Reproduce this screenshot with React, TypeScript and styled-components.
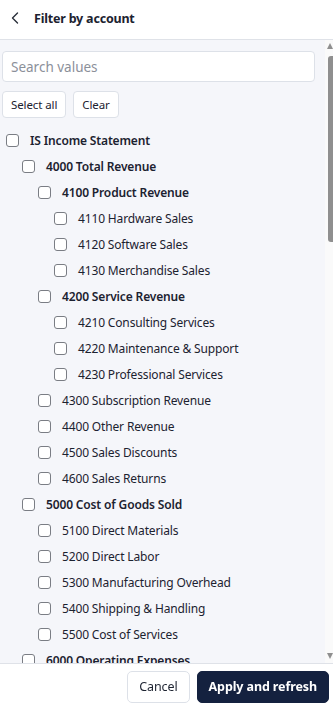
import React, { useEffect, useRef, useState } from "react";
import styled, { createGlobalStyle } from "styled-components";

const GlobalStyle = createGlobalStyle`
  html, body { margin: 0; padding: 0; height: 100%; }
  body { font-family: "Noto Sans", "Open Sans", sans-serif; color: #1c2230; background: #fff; }
  #root { height: 100%; }
`;

const Panel = styled.div`
  height: 100vh;
  display: flex;
  flex-direction: column;
  background: #fff;
`;

const Header = styled.div`
  height: 40px;
  box-sizing: border-box;
  flex: none;
  display: flex;
  align-items: center;
  gap: 12px;
  padding: 0 0 3px 8px;
  border-bottom: 1px solid #dfe2e8;
`;

const BackButton = styled.button`
  border: 0;
  background: none;
  padding: 0;
  width: 14px;
  height: 16px;
  display: flex;
  align-items: center;
  justify-content: center;
  color: #2a2f3a;
`;

const Title = styled.h1`
  margin: 0;
  font-size: 12.5px;
  font-weight: 700;
  letter-spacing: -0.2px;
`;

const Body = styled.div`
  flex: 1;
  min-height: 0;
  display: flex;
`;

const Scroll = styled.div`
  flex: 1;
  overflow-y: auto;
  background: #f5f6fa;
  padding: 11px 10px 0 2px;
  scrollbar-width: none;
  &::-webkit-scrollbar { display: none; }
`;

const Track = styled.div`
  flex: none;
  width: 8px;
  background: #fafafa;
  display: flex;
  flex-direction: column;
  align-items: flex-end;
`;

const Arrow = styled.div<{ $down?: boolean }>`
  flex: none;
  width: 0;
  height: 0;
  margin: ${(p) => (p.$down ? "auto 0 4px 0" : "3px 0 0 0")};
  border-left: 3.5px solid transparent;
  border-right: 3.5px solid transparent;
  ${(p) => (p.$down ? "border-top: 6px solid #8f8f8f;" : "border-bottom: 6px solid #8f8f8f;")}
`;

const Thumb = styled.div`
  flex: none;
  width: 5px;
  background: #8f8f8f;
  border-radius: 3px 0 0 3px;
`;

const SearchInput = styled.input`
  display: block;
  box-sizing: border-box;
  width: 100%;
  height: 31px;
  padding: 0 8px;
  border: 1px solid #dde1e8;
  border-radius: 4px;
  background: #fff;
  font-family: inherit;
  font-size: 13.5px;
  color: #1c2230;
  outline: none;
  &::placeholder { color: #8b909a; }
`;

const Actions = styled.div`
  display: flex;
  gap: 7px;
  margin-top: 9px;
  margin-bottom: 9px;
`;

const SmallButton = styled.button`
  height: 27px;
  padding: 0 8px;
  background: #fff;
  border: 1px solid #dde1e8;
  border-radius: 4px;
  font-family: inherit;
  font-size: 11.5px;
  letter-spacing: -0.1px;
  color: #1c2230;
`;

const Tree = styled.ul`
  list-style: none;
  margin: 0;
  padding: 0 0 8px 0;
`;

const Row = styled.li<{ $level: number; $bold?: boolean }>`
  height: 26px;
  display: flex;
  align-items: center;
  gap: 11px;
  padding-left: ${(p) => 4 + p.$level * 16}px;
  font-size: 12px;
  letter-spacing: -0.15px;
  font-weight: ${(p) => (p.$bold ? 600 : 400)};
  white-space: nowrap;
`;

const Box = styled.input.attrs({ type: "checkbox" })`
  appearance: none;
  margin: 0;
  width: 13px;
  height: 13px;
  flex: none;
  border: 1px solid #7a7d84;
  border-radius: 3px;
  background: #fff;
`;

const Footer = styled.div`
  flex: none;
  height: 46px;
  box-sizing: border-box;
  border-top: 1px solid #dfe2e8;
  display: flex;
  align-items: center;
  justify-content: flex-end;
  gap: 7px;
  padding: 0 4px 0 0;
`;

const FooterButton = styled.button<{ $primary?: boolean }>`
  height: 32px;
  padding: 0 11px;
  border-radius: 5px;
  font-family: inherit;
  font-size: 12.5px;
  letter-spacing: -0.1px;
  font-weight: ${(p) => (p.$primary ? 700 : 400)};
  color: ${(p) => (p.$primary ? "#fff" : "#1c2230")};
  background: ${(p) => (p.$primary ? "#14213f" : "#fff")};
  border: 1px solid ${(p) => (p.$primary ? "#14213f" : "#dde1e8")};
`;

type Item = [number, string, boolean?];

const items: Item[] = [
  [0, "IS Income Statement", true],
  [1, "4000 Total Revenue", true],
  [2, "4100 Product Revenue", true],
  [3, "4110 Hardware Sales"],
  [3, "4120 Software Sales"],
  [3, "4130 Merchandise Sales"],
  [2, "4200 Service Revenue", true],
  [3, "4210 Consulting Services"],
  [3, "4220 Maintenance & Support"],
  [3, "4230 Professional Services"],
  [2, "4300 Subscription Revenue"],
  [2, "4400 Other Revenue"],
  [2, "4500 Sales Discounts"],
  [2, "4600 Sales Returns"],
  [1, "5000 Cost of Goods Sold", true],
  [2, "5100 Direct Materials"],
  [2, "5200 Direct Labor"],
  [2, "5300 Manufacturing Overhead"],
  [2, "5400 Shipping & Handling"],
  [2, "5500 Cost of Services"],
  [1, "6000 Operating Expenses", true],
  [2, "6100 Personnel Expenses", true],
  [3, "6110 Salaries & Wages"],
  [3, "6120 Payroll Taxes"],
  [3, "6130 Employee Benefits"],
  [3, "6140 Bonuses & Commissions"],
  [2, "6200 Facilities", true],
  [3, "6210 Rent"],
  [3, "6220 Utilities"],
  [3, "6230 Repairs & Maintenance"],
  [2, "6300 Sales & Marketing", true],
  [3, "6310 Advertising"],
  [3, "6320 Trade Shows"],
  [3, "6330 Promotions"],
  [2, "6400 General & Administrative", true],
  [3, "6410 Office Supplies"],
  [3, "6420 Insurance"],
  [3, "6430 Legal Fees"],
  [3, "6440 Accounting Fees"],
  [3, "6450 Bank Charges"],
  [2, "6500 Technology", true],
  [3, "6510 Software Subscriptions"],
  [3, "6520 Hosting & Cloud"],
  [3, "6530 IT Equipment"],
  [2, "6600 Travel & Entertainment"],
  [2, "6700 Depreciation"],
  [2, "6800 Amortization"],
  [1, "7000 Other Income", true],
  [2, "7100 Interest Income"],
  [2, "7200 Gain on Sale of Assets"],
  [2, "7300 Foreign Exchange Gain"],
  [1, "8000 Other Expenses", true],
  [2, "8100 Interest Expense"],
  [2, "8200 Loss on Sale of Assets"],
  [2, "8300 Foreign Exchange Loss"],
  [1, "9000 Income Taxes", true],
  [2, "9100 Current Tax Expense"],
  [2, "9200 Deferred Tax Expense"],
  [0, "BS Balance Sheet", true],
  [1, "1000 Assets", true],
  [2, "1100 Cash"],
  [2, "1200 Accounts Receivable"],
  [2, "1300 Inventory"],
  [2, "1400 Prepaid Expenses"],
  [2, "1500 Fixed Assets"],
  [1, "2000 Liabilities", true],
  [2, "2100 Accounts Payable"],
  [2, "2200 Accrued Liabilities"],
  [2, "2300 Long-term Debt"],
  [1, "3000 Equity", true],
  [2, "3100 Common Stock"],
  [2, "3200 Retained Earnings"],
];

const App = () => {
  const scrollRef = useRef<HTMLDivElement>(null);
  const [thumb, setThumb] = useState({ offset: 7, height: 180 });

  useEffect(() => {
    const el = scrollRef.current;
    if (!el) return;
    const update = () => {
      const usable = el.clientHeight - 36;
      const height = Math.max(24, (el.clientHeight / el.scrollHeight) * usable);
      const offset = 7 + (el.scrollTop / el.scrollHeight) * usable;
      setThumb({ offset, height });
    };
    update();
    el.addEventListener("scroll", update);
    window.addEventListener("resize", update);
    return () => {
      el.removeEventListener("scroll", update);
      window.removeEventListener("resize", update);
    };
  }, []);

  return (
    <Panel>
      <GlobalStyle />
      <Header>
        <BackButton aria-label="Back">
          <svg width="8" height="12" viewBox="0 0 8 12" fill="none">
            <path d="M6.5 1 L1.5 6 L6.5 11" stroke="currentColor" strokeWidth="1.4" strokeLinecap="round" strokeLinejoin="round" />
          </svg>
        </BackButton>
        <Title>Filter by account</Title>
      </Header>
      <Body>
        <Scroll ref={scrollRef}>
          <SearchInput placeholder="Search values" />
          <Actions>
            <SmallButton>Select all</SmallButton>
            <SmallButton>Clear</SmallButton>
          </Actions>
          <Tree>
            {items.map(([level, label, bold]) => (
              <Row key={label} $level={level} $bold={bold}>
                <Box />
                <span>{label}</span>
              </Row>
            ))}
          </Tree>
        </Scroll>
        <Track>
          <Arrow />
          <Thumb style={{ marginTop: thumb.offset, height: thumb.height }} />
          <Arrow $down />
        </Track>
      </Body>
      <Footer>
        <FooterButton>Cancel</FooterButton>
        <FooterButton $primary>Apply and refresh</FooterButton>
      </Footer>
    </Panel>
  );
};

export default App;
